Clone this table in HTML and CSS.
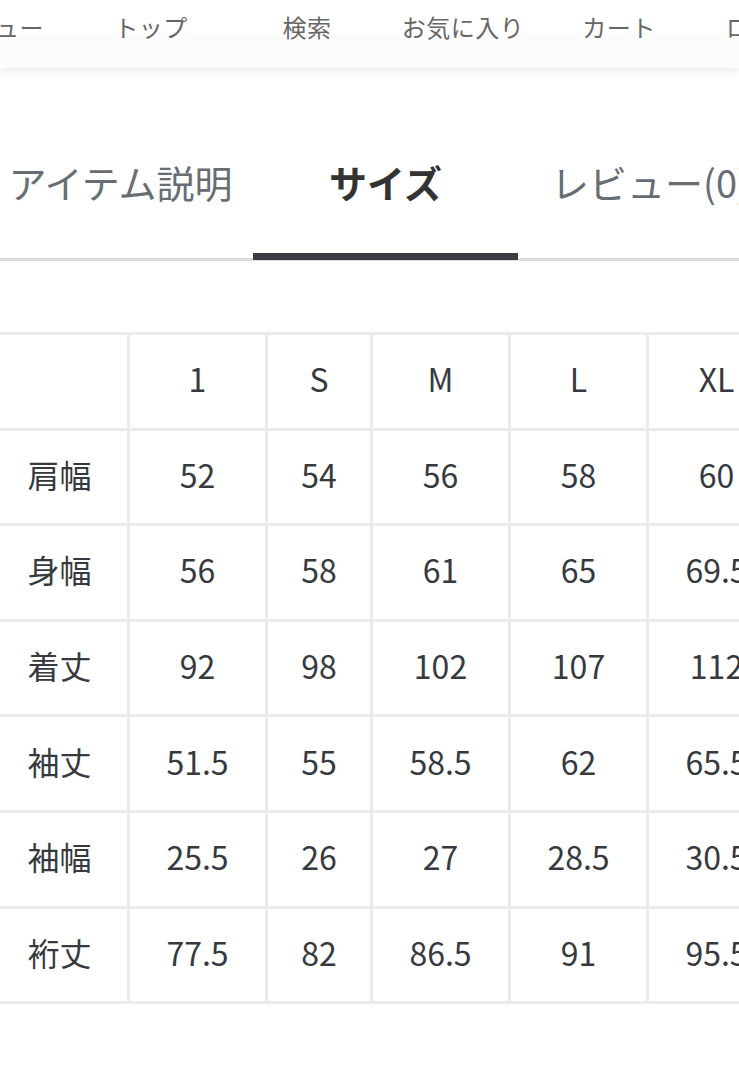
FILE: index.html
```html
<!DOCTYPE html>
<html lang="ja">
<head>
<meta charset="utf-8">
<title>サイズ</title>
<link rel="stylesheet" href="styles.css">
</head>
<body>
<div class="page">
  <nav class="nav">
    <div class="nav-track">
      <a class="nav-item">メニュー</a>
      <a class="nav-item">トップ</a>
      <a class="nav-item">検索</a>
      <a class="nav-item">お気に入り</a>
      <a class="nav-item">カート</a>
      <a class="nav-item">ログイン</a>
    </div>
  </nav>
  <div class="tabs">
    <div class="tab-track">
      <div class="tab">アイテム説明</div>
      <div class="tab active">サイズ</div>
      <div class="tab">レビュー(0)</div>
    </div>
  </div>
  <div class="table-wrap">
    <div class="size-table">
      <div class="cell"></div><div class="cell">1</div><div class="cell">S</div><div class="cell">M</div><div class="cell">L</div><div class="cell">XL</div>
      <div class="cell">肩幅</div><div class="cell">52</div><div class="cell">54</div><div class="cell">56</div><div class="cell">58</div><div class="cell">60</div>
      <div class="cell">身幅</div><div class="cell">56</div><div class="cell">58</div><div class="cell">61</div><div class="cell">65</div><div class="cell">69.5</div>
      <div class="cell">着丈</div><div class="cell">92</div><div class="cell">98</div><div class="cell">102</div><div class="cell">107</div><div class="cell">112</div>
      <div class="cell">袖丈</div><div class="cell">51.5</div><div class="cell">55</div><div class="cell">58.5</div><div class="cell">62</div><div class="cell">65.5</div>
      <div class="cell">袖幅</div><div class="cell">25.5</div><div class="cell">26</div><div class="cell">27</div><div class="cell">28.5</div><div class="cell">30.5</div>
      <div class="cell">裄丈</div><div class="cell">77.5</div><div class="cell">82</div><div class="cell">86.5</div><div class="cell">91</div><div class="cell">95.5</div>
    </div>
  </div>
</div>
</body>
</html>
```
FILE: styles.css
```css
html, body {
  margin: 0;
  padding: 0;
  background: #ffffff;
}
body {
  font-family: "Noto Sans CJK JP", "Noto Sans", sans-serif;
  color: #333;
}
.page {
  width: 739px;
  height: 1080px;
  overflow: hidden;
  position: relative;
}
.nav {
  height: 68px;
  background: linear-gradient(#ffffff 0 34px, #fcfcfc 34px 68px);
  box-shadow: 0 3px 10px rgba(0, 0, 0, 0.09);
  position: relative;
  z-index: 1;
}
.nav-track {
  display: flex;
  margin-left: -83px;
  width: 936px;
}
.nav-item {
  flex: 0 0 156px;
  text-align: center;
  font-size: 24px;
  line-height: 30px;
  padding-top: 12px;
  color: #666;
  letter-spacing: 0.5px;
}
.tabs {
  border-bottom: 3px solid #dcdcdc;
}
.tab-track {
  display: flex;
  margin-left: -12px;
  width: 795px;
}
.tab {
  flex: 0 0 265px;
  text-align: center;
  font-size: 38px;
  line-height: 56px;
  padding: 86px 0 48px;
  color: #676d72;
  position: relative;
  white-space: nowrap;
}
.tab.active {
  font-weight: 700;
  color: #333;
}
.tab.active::after {
  content: "";
  position: absolute;
  left: 0;
  right: 0;
  bottom: -2px;
  height: 7px;
  background: #3a3d42;
}
.table-wrap {
  padding-top: 71px;
  margin-left: -11px;
}
.size-table {
  display: inline-grid;
  grid-template-columns: 135px 135px 102px 135px 135px 135px;
  grid-auto-rows: 92.6px;
  gap: 3px;
  padding: 3px;
  background: #ebebeb;
}
.cell {
  background: #fff;
  display: flex;
  align-items: center;
  justify-content: center;
  padding-bottom: 6px;
  box-sizing: border-box;
  font-size: 32px;
  color: #363a3f;
}
```
